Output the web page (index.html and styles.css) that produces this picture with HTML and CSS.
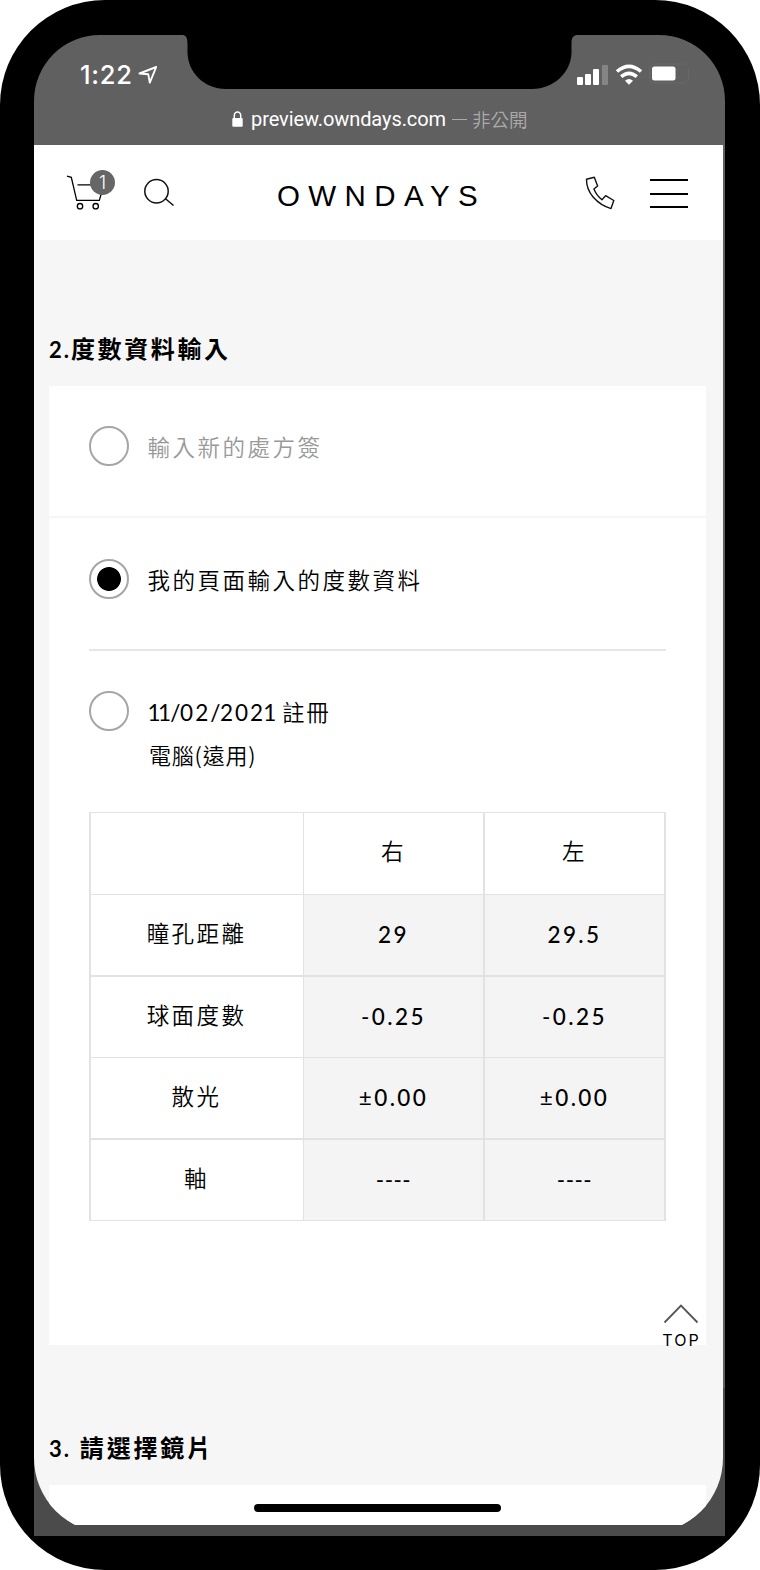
FILE: index.html
```html
<!DOCTYPE html>
<html lang="zh-Hant">
<head>
<meta charset="utf-8">
<title>OWNDAYS</title>
<link rel="stylesheet" href="styles.css">
</head>
<body>
<div class="phone">
  <div class="screen">
    <header class="status">
      <div class="status-row">
        <div class="clock"><span class="time">1:22</span>
          <svg class="loc" width="20" height="20" viewBox="0 0 20 20"><path d="M1.500 8.500 18.200 2 11.800 17.600 10.300 9.300Z" fill="none" stroke="#fff" stroke-width="1.900" stroke-linejoin="round"/></svg>
        </div>
        <svg class="signals" width="114" height="24" viewBox="0 0 114 24">
          <g fill="#fff"><rect x="0" y="14" width="6" height="8" rx="1"/><rect x="8" y="11" width="6" height="11" rx="1"/><rect x="16" y="6" width="6" height="16" rx="1"/></g>
          <rect x="25" y="2" width="6" height="20" rx="1" fill="#858585"/>
          <g fill="none" stroke="#fff" stroke-width="3.600"><path d="M40 8.500Q52 -1.800 64 8.500"/><path d="M44.200 13.700Q52 7.100 59.800 13.700"/></g>
          <path d="M48 17.700Q52 14.500 56 17.700L52 21.700Z" fill="#fff"/>
          <rect x="72.500" y="1" width="39" height="19" rx="5" fill="none" stroke="#686868"/>
          <rect x="75" y="3.500" width="23.500" height="14" rx="2.500" fill="#fff"/>
        </svg>
      </div>
      <div class="address">
        <svg width="11" height="16" viewBox="0 0 11 16"><rect x="0.300" y="7" width="10.400" height="8.700" rx="1" fill="#fff"/><path d="M2.300 8V4.500a3.200 3.500 0 0 1 6.400 0V8" fill="none" stroke="#fff" stroke-width="1.500"/></svg>
        <span class="url">preview.owndays.com</span><span class="dash"></span><span class="private">非公開</span>
      </div>
    </header>
    <div class="viewport">
      <div class="page">
        <nav class="nav">
          <div class="cart">
            <svg width="50" height="42" viewBox="0 0 50 42"><g fill="none" stroke="#000" stroke-width="1.300"><path d="M1 6.200 5.300 7.300 10.700 30.400H33.300L37 18"/><path d="M11.500 14.800H30"/><circle cx="14" cy="36.200" r="2.700"/><circle cx="29.700" cy="36.200" r="2.700"/></g></svg>
            <span class="badge">1</span>
          </div>
          <svg class="search" width="32" height="30" viewBox="0 0 32 30"><g fill="none" stroke="#111" stroke-width="1.500"><circle cx="13.500" cy="13.300" r="11.700"/><path d="M22.500 20.800 30.500 27.500"/></g></svg>
          <div class="logo">OWNDAYS</div>
          <svg class="tel" width="30" height="34" viewBox="0 0 30 34"><path d="M1.500 3.200 9.300 1.300 12.600 10 8.900 13Q11.500 19.500 17 23.700L20.600 19.600 28.800 24.500 26 32.600Q15.500 29.500 8.300 21.300Q1.300 13 1.500 3.200Z" fill="none" stroke="#111" stroke-width="1.400" stroke-linejoin="round"/></svg>
          <div class="menu"><i></i><i></i><i></i></div>
        </nav>
        <main class="content">
          <h2 class="title">2.<span>度數資料輸入</span></h2>
          <section class="card">
            <div class="option new"><span class="radio"></span><span class="muted">輸入新的處方簽</span></div>
            <div class="saved">
              <div class="option mine"><span class="radio on"></span><span>我的頁面輸入的度數資料</span></div>
              <div class="record">
                <span class="radio"></span>
                <div class="record-text"><div class="date"><i class="one">1</i><i class="one second">1</i><i class="slash">/</i>02<i class="slash">/</i>202<i class="last">1</i> <span>註冊</span></div><div class="usage">電腦(遠用)</div></div>
              </div>
              <div class="table">
                <div></div><div>右</div><div>左</div>
                <div>瞳孔距離</div><div class="num">29</div><div class="num">29.5</div>
                <div>球面度數</div><div class="num"><b>-</b>0.25</div><div class="num"><b>-</b>0.25</div>
                <div>散光</div><div class="num"><b>±</b>0.00</div><div class="num"><b>±</b>0.00</div>
                <div>軸</div><div class="num"><b class="dashes">----</b></div><div class="num"><b class="dashes">----</b></div>
              </div>
            </div>
            <a class="top"><svg width="36" height="20" viewBox="0 0 36 20"><path d="M1.500 18.500 18 1.500 34.500 18.500" fill="none" stroke="#555" stroke-width="1.800"/></svg><span>TOP</span></a>
          </section>
          <h2 class="title third">3. <span>請選擇鏡片</span></h2>
          <section class="card next"></section>
        </main>
      </div>
      <div class="home"></div>
    </div>
  </div>
  <svg class="notch" width="394" height="56" viewBox="0 0 394 56"><path d="M0 0V1C3.500 1.500 4.500 5 4.500 10V18C4.500 38 21 55 43 55H349C371 55 388.500 38 388.500 18V9C388.500 4 390 1.500 394 1V0Z" fill="#000"/></svg>
</div>
</body>
</html>
```
FILE: styles.css
```css
* { box-sizing: border-box; }
body { margin: 0; background: #fff; color: #000; font-family: Lato, "Noto Sans CJK TC", sans-serif; }
.phone { position: relative; width: 760px; height: 1570px; padding: 35px 35px 34px 34px; background: #000; border-radius: 105px; }
.screen { height: 1501px; background: linear-gradient(#606060 1353px, #4b4b4b 1353px); border-radius: 66px 66px 0 0; overflow: hidden; }
.notch { position: absolute; left: 183px; top: 34px; }

.status { height: 110px; color: #fff; }
.status-row { display: flex; justify-content: space-between; padding: 24px 34px 0 46px; height: 68px; }
.clock { display: flex; align-items: center; height: 32px; gap: 5px; font: 500 25.5px/32px Inter, sans-serif; letter-spacing: .7px; }
.signals { margin-top: 4px; }
.address { display: flex; align-items: center; height: 32px; padding-left: 197.5px; }
.url { margin-left: 8.5px; font: 20px/30px Roboto, sans-serif; letter-spacing: -.08px; white-space: nowrap; }
.dash { width: 15px; height: 1.5px; margin: 1px 5.5px 0; background: #aaa; }
.private { color: #aaa; font: 350 18.5px/30px "Noto Sans CJK TC", sans-serif; }

.viewport { position: relative; width: 688.5px; height: 1380px; overflow: hidden; }
.page { height: 1388px; background: #f6f6f6; border-radius: 0 0 75px 75px; overflow: hidden; }
.nav { display: flex; align-items: flex-start; height: 95px; padding: 0 35px 0 32px; background: #fff; }
.cart { position: relative; width: 50px; height: 42px; margin-top: 25px; }
.badge { position: absolute; left: 24px; top: 0; width: 25px; height: 25px; border-radius: 50%; background: #666; color: #fff; text-align: center; font: 300 18px/26px Inter, sans-serif; }
.search { margin: 33px 0 0 27px; }
.logo { width: 218px; margin: 32px 0 0 102px; font: 29.5px/38px "Liberation Sans", sans-serif; letter-spacing: 8.4px; white-space: nowrap; }
.tel { margin: 31px 0 0 90px; }
.menu { display: flex; flex-direction: column; justify-content: space-between; width: 38px; height: 29px; margin: 34px 0 0 auto; }
.menu i { height: 2px; background: #000; }

.content { padding: 86px 17px 0 15px; }
.title { margin: 0; height: 60px; font: bold 22px/44px Lato, "Noto Sans CJK TC", sans-serif; letter-spacing: 2px; white-space: pre; }
.title span { font-family: "Noto Sans CJK TC", sans-serif; font-size: 24px; letter-spacing: 2.6px; }
.card { position: relative; height: 959px; background: #fff; }
.option { display: flex; align-items: center; gap: 18.5px; font-family: "Noto Sans CJK TC", sans-serif; font-weight: 350; font-size: 22.5px; letter-spacing: 2.5px; }
.radio { flex: none; width: 40px; height: 40px; border: 2px solid #a6a6a6; border-radius: 50%; }
.radio.on { background: radial-gradient(circle, #000 11.5px, #fff 12.3px); }
.new { height: 132px; padding: 0 40px 11px; border-bottom: 2px solid #f6f6f6; }
.muted { color: #999; }
.saved { padding: 0 40px; }
.mine { height: 133px; padding-bottom: 9px; border-bottom: 2px solid #e6e6e6; }
.record { display: flex; gap: 20px; height: 161px; padding-top: 40px; }
.record-text { font-family: Lato, "Noto Sans CJK TC", sans-serif; font-size: 22.5px; line-height: 41px; }
.date { height: 43px; letter-spacing: 2px; white-space: pre; }
.date i { font-style: normal; }
.date .one { margin-left: -1.5px; letter-spacing: -2.5px; }
.date .second { margin-left: 0; letter-spacing: -.8px; }
.date .slash { letter-spacing: -.4px; }
.date .last { margin-left: -2px; letter-spacing: -1.5px; }
.date span, .usage { font-family: "Noto Sans CJK TC", sans-serif; font-weight: 350; }
.date span { margin-left: -.5px; letter-spacing: 1.8px; }
.usage { font-size: 22px; letter-spacing: .8px; }
.table { display: grid; grid-template-columns: 215px 181px 181px; grid-template-rows: 82px 82px 81px 82px 81px; width: 577px; border-top: 1px solid #e2e2e2; }
.table > div { display: flex; align-items: center; justify-content: center; padding-bottom: 7px; border-right: 2px solid #e2e2e2; border-bottom: 1px solid #e2e2e2; font: 350 22.5px/40px "Noto Sans CJK TC", sans-serif; letter-spacing: 2.4px; }
.table > div:nth-child(3n+1) { padding-right: 1px; border-left: 2px solid #e2e2e2; border-right-width: 1px; }
.table > div:nth-child(n+4):nth-child(-n+6), .table > div:nth-child(n+10):nth-child(-n+12) { border-bottom-width: 2px; }
.table > .num { padding: 0; background: #f4f4f4; font: 500 22.5px/40px Lato, sans-serif; }
.num b { font-weight: 400; }
.dashes { letter-spacing: .5px; }
.top { position: absolute; right: 5px; bottom: -5px; display: flex; flex-direction: column; align-items: center; width: 40px; font: 16px/20px Inter, sans-serif; letter-spacing: 2px; }
.top span { margin-right: -2px; }
.top svg { margin-bottom: 6px; }
.third { height: 140px; padding-top: 80px; }
.third span { margin-left: 1.5px; letter-spacing: 2.8px; }
.next { height: 60px; }
.home { position: absolute; left: 220px; top: 1359px; width: 247px; height: 8px; border-radius: 4px; background: #000; }
```
